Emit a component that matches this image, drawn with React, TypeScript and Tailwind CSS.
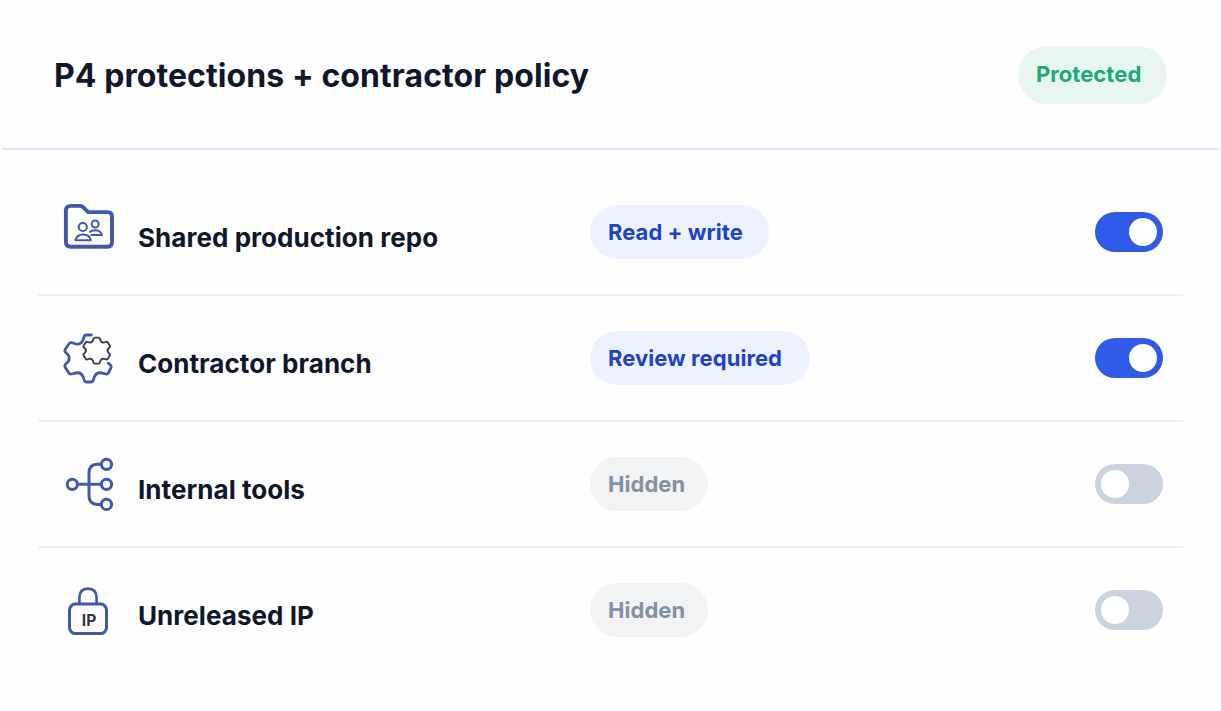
import React from "react";

type Tone = "blue" | "gray";

type Policy = {
  name: string;
  access: string;
  tone: Tone;
  width: string;
  enabled: boolean;
  icon: React.ReactNode;
};

const FolderIcon = () => (
  <svg className="size-[60px]" viewBox="0 0 60 60" fill="none" stroke="#4059ad" strokeLinejoin="round">
    <path
      d="M12.8 3.9H22.3Q23.8 3.9 24.8 4.9L30.2 10.1H49.5Q54 10.1 54 14.6V40.1Q54 44.7 49.5 44.7H12.8Q7.9 44.7 7.9 40.1V8.6Q7.9 3.9 12.8 3.9Z"
      strokeWidth="3.9"
    />
    <g strokeWidth="2">
      <circle cx="24.8" cy="25" r="4.1" />
      <path d="M17.4 38.3Q18.8 32.6 25.1 32.6Q31.3 32.6 32.8 38.3Z" />
      <circle cx="37.2" cy="22" r="3.5" />
      <path d="M31.5 30.3Q33.8 28.2 37.2 28.2Q42.6 28.2 44 33.1H32.6" />
    </g>
  </svg>
);

const GearsIcon = () => (
  <svg className="size-[60px]" viewBox="0 0 60 60" fill="none" strokeLinecap="round" strokeLinejoin="round">
    <path
      d="M33.3 7H28.4Q26.6 7 26.1 8.7L25 12Q23.8 15.3 20.5 16.1Q18.6 16.4 16.5 15.5L13.6 14.7Q12 14.2 11 15.7L7.3 21.3Q6.3 23 7.5 24.2L10 26.7Q12.5 30.2 10 33.8L7.5 36.3Q6.3 37.7 7.2 39.2L10.8 45Q11.8 46.4 13.5 46L17 45.1Q23 43.6 25.2 49L26.3 52.4Q26.8 54 28.5 54H33Q34.7 54 35.2 52.4L36.3 49Q38.5 43.6 44.3 45.1L47.8 46Q49.5 46.4 50.3 45L53 39.8Q53.6 38.2 52.5 37L50.3 35.2"
      stroke="#4059ad"
      strokeWidth="2.8"
    />
    <path
      d="M36.8 9.6H40.6Q41.5 9.6 41.8 10.5L42.3 12.2Q43.4 15 46.2 14.3L48.2 13.8Q49.2 13.5 49.7 14.4L51.8 17.7Q52.3 18.6 51.6 19.3L50.4 20.5Q48.5 22.6 50.4 24.7L51.6 25.9Q52.3 26.6 51.8 27.5L49.7 30.8Q49.2 31.7 48.2 31.4L46.2 30.9Q43.4 30.2 42.3 33L41.8 34.7Q41.5 35.6 40.6 35.6H36.8Q35.9 35.6 35.6 34.7L35.1 33Q34 30.2 31.2 30.9L29.2 31.4Q28.2 31.7 27.7 30.8L25.6 27.5Q25.1 26.6 25.8 25.9L27 24.7Q28.9 22.6 27 20.5L25.8 19.3Q25.1 18.6 25.6 17.7L27.7 14.4Q28.2 13.5 29.2 13.8L31.2 14.3Q34 15 35.1 12.2L35.6 10.5Q35.9 9.6 36.8 9.6Z"
      stroke="#3d3a49"
      strokeWidth="1.9"
    />
  </svg>
);

const BranchIcon = () => (
  <svg className="size-[60px]" viewBox="0 0 60 60" fill="none" stroke="#4059ad" strokeWidth="3">
    <circle cx="14.3" cy="30.3" r="5.1" />
    <circle cx="48.5" cy="10.3" r="5.1" />
    <circle cx="48.5" cy="30.3" r="5.1" />
    <circle cx="48.5" cy="50.4" r="5.1" />
    <path d="M19.4 30.3H43.4M43.4 10.3H39Q31 10.8 31 19V41.5Q31 50 39 50.4H43.4" />
  </svg>
);

const LockIcon = () => (
  <svg className="size-[60px]" viewBox="0 0 60 60" fill="none" stroke="#4059ad" strokeWidth="3">
    <rect x="11.5" y="24.1" width="37" height="29.5" rx="6" />
    <path d="M21.4 24V18Q21.4 8.6 30 8.6Q38.6 8.6 38.6 18V24" strokeWidth="2.6" />
    <text x="31" y="45.7" textAnchor="middle" stroke="none" fill="#35334a" className="font-[Inter,sans-serif] text-[15.5px] font-bold">
      IP
    </text>
  </svg>
);

const policies: Policy[] = [
  { name: "Shared production repo", access: "Read + write", tone: "blue", width: "w-[179px]", enabled: true, icon: <FolderIcon /> },
  { name: "Contractor branch", access: "Review required", tone: "blue", width: "w-[220px]", enabled: true, icon: <GearsIcon /> },
  { name: "Internal tools", access: "Hidden", tone: "gray", width: "w-[118px]", enabled: false, icon: <BranchIcon /> },
  { name: "Unreleased IP", access: "Hidden", tone: "gray", width: "w-[118px]", enabled: false, icon: <LockIcon /> },
];

const tones: Record<Tone, string> = {
  blue: "bg-[#edf2ff] text-[#2042c8]",
  gray: "bg-[#f1f3f5] text-[#8490a3]",
};

const Toggle = ({ enabled }: { enabled: boolean }) => (
  <button
    role="switch"
    aria-checked={enabled}
    className={`flex h-10 w-[68px] items-center rounded-full px-1.5 ${
      enabled ? "justify-end bg-[#305ae8]" : "justify-start bg-[#cbd2e0]"
    }`}
  >
    <span className="size-7 rounded-full bg-white" />
  </button>
);

const PolicyRow = ({ name, access, tone, width, enabled, icon }: Policy) => (
  <li className="flex h-[126px] items-center border-b-2 border-[#edf1f7] pr-5 pl-5 last:border-transparent">
    {icon}
    <span className="ml-5 w-[452px] pt-3 text-[26px] leading-8 font-bold tracking-[0.05px] text-[#0f172a]">{name}</span>
    <span
      className={`flex h-[54px] items-center rounded-full pl-[18px] text-[22px] font-bold tracking-[0.05px] whitespace-nowrap ${width} ${tones[tone]}`}
    >
      {access}
    </span>
    <div className="ml-auto flex">
      <Toggle enabled={enabled} />
    </div>
  </li>
);

const App = () => {
  return (
    <main className="h-[711px] w-[1221px] overflow-hidden bg-[#fefefe] px-0.5 font-[Inter,sans-serif]">
      <header className="flex h-[150px] items-center justify-between border-b-2 border-[#dce4f8] pt-0.5 pr-[52px] pl-[52px]">
        <h1 className="pt-0.5 text-[32px] font-bold tracking-[0.08px] text-[#0f172a]">P4 protections + contractor policy</h1>
        <span className="flex h-[58px] w-[149px] items-center rounded-full bg-[#e7f6f1] pb-0.5 pl-[18px] text-[22px] font-bold tracking-[0.05px] text-[#1ca878]">
          Protected
        </span>
      </header>
      <ul className="mt-5 mr-9 ml-9">
        {policies.map((p) => (
          <PolicyRow key={p.name} {...p} />
        ))}
      </ul>
    </main>
  );
};

export default App;
